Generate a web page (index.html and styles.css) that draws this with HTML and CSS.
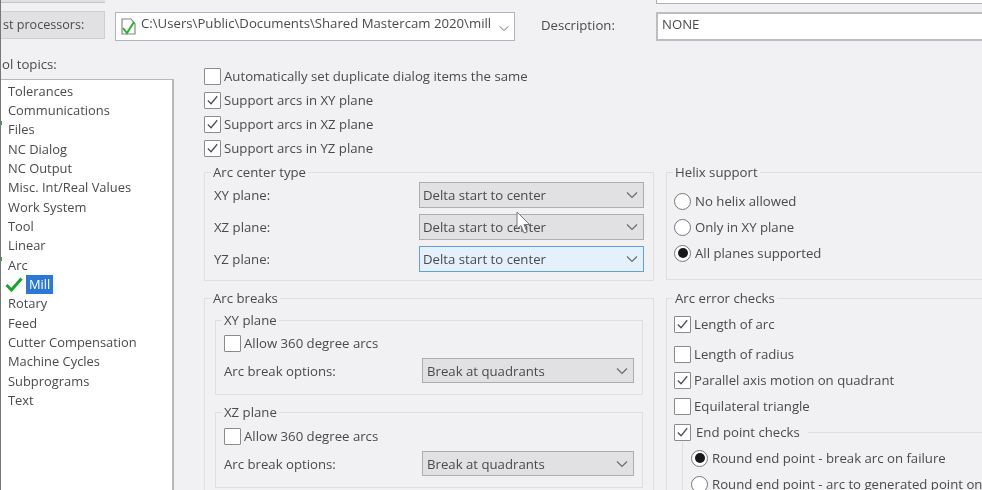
FILE: index.html
```html
<!DOCTYPE html>
<html lang="en">
<head>
<meta charset="utf-8">
<title>Machine definition control topics</title>
<link rel="stylesheet" href="styles.css">
</head>
<body>
<svg class="defs" width="0" height="0" aria-hidden="true">
  <symbol id="chev" viewBox="0 0 12 8"><path d="M1 1.5 6 6.5 11 1.5" fill="none" stroke="#6b6b6f" stroke-width="1.2"/></symbol>
  <symbol id="tick" viewBox="0 0 16 16"><path d="M3 8.5 6.5 12 13 4" fill="none" stroke="#4c4c50" stroke-width="1.3"/></symbol>
</svg>
<div class="dialog">
  <div class="stub-row"><div class="stub-btn"></div><div class="stub-input"></div></div>
  <div class="top-row">
    <div class="pp-button">st processors:</div>
    <div class="pp-combo">
      <svg class="file-icon" width="15" height="17" viewBox="0 0 15 17"><path d="M1 1H10L14 6V16H1Z" fill="#fff" stroke="#858585" stroke-width="1.2"/><path d="M2 10 6 15 13 4" fill="none" stroke="#22b52e" stroke-width="2"/></svg>
      <span class="pp-path">C:\Users\Public\Documents\Shared Mastercam 2020\mill</span>
      <svg class="chev" width="10" height="7"><use href="#chev"/></svg>
    </div>
    <div class="desc-label">Description:</div>
    <div class="desc-input">NONE</div>
  </div>
  <div class="body-row">
    <aside class="side">
      <div class="side-label">ol topics:</div>
      <ul class="topics">
        <li>Tolerances</li>
        <li>Communications</li>
        <li class="dotted">Files</li>
        <li>NC Dialog</li>
        <li>NC Output</li>
        <li>Misc. Int/Real Values</li>
        <li>Work System</li>
        <li>Tool</li>
        <li>Linear</li>
        <li class="dotted">Arc</li>
        <li class="mill">
          <svg class="green-check" width="18" height="15" viewBox="0 0 18 15"><path d="M1.5 8 6.5 13 16.5 1.5" fill="none" stroke="#12a62a" stroke-width="3"/></svg>
          <span class="selected">Mill</span>
        </li>
        <li>Rotary</li>
        <li>Feed</li>
        <li>Cutter Compensation</li>
        <li>Machine Cycles</li>
        <li>Subprograms</li>
        <li>Text</li>
      </ul>
    </aside>
    <main class="main">
      <div class="opts">
        <label class="check"><span class="box"></span>Automatically set duplicate dialog items the same</label>
        <label class="check"><span class="box"><svg width="16" height="16"><use href="#tick"/></svg></span>Support arcs in XY plane</label>
        <label class="check"><span class="box"><svg width="16" height="16"><use href="#tick"/></svg></span>Support arcs in XZ plane</label>
        <label class="check"><span class="box"><svg width="16" height="16"><use href="#tick"/></svg></span>Support arcs in YZ plane</label>
      </div>
      <div class="groups">
        <fieldset class="group center-type">
          <legend>Arc center type</legend>
          <div class="plane-row"><span>XY plane:</span><div class="select wide"><span>Delta start to center</span><svg width="12" height="8"><use href="#chev"/></svg></div></div>
          <div class="plane-row"><span>XZ plane:</span><div class="select wide"><span>Delta start to center</span><svg width="12" height="8"><use href="#chev"/></svg></div></div>
          <div class="plane-row"><span>YZ plane:</span><div class="select wide focused"><span>Delta start to center</span><svg width="12" height="8"><use href="#chev"/></svg></div></div>
        </fieldset>
        <fieldset class="group helix">
          <legend>Helix support</legend>
          <label class="radio-row"><span class="radio"></span>No helix allowed</label>
          <label class="radio-row"><span class="radio"></span>Only in XY plane</label>
          <label class="radio-row"><span class="radio on"></span>All planes supported</label>
        </fieldset>
        <fieldset class="group breaks">
          <legend>Arc breaks</legend>
          <fieldset class="group inner">
            <legend>XY plane</legend>
            <label class="check small"><span class="box"></span>Allow 360 degree arcs</label>
            <div class="break-row"><span>Arc break options:</span><div class="select narrow"><span>Break at quadrants</span><svg width="12" height="8"><use href="#chev"/></svg></div></div>
          </fieldset>
          <fieldset class="group inner">
            <legend>XZ plane</legend>
            <label class="check small"><span class="box"></span>Allow 360 degree arcs</label>
            <div class="break-row"><span>Arc break options:</span><div class="select narrow"><span>Break at quadrants</span><svg width="12" height="8"><use href="#chev"/></svg></div></div>
          </fieldset>
        </fieldset>
        <fieldset class="group errors">
          <legend>Arc error checks</legend>
          <label class="check first"><span class="box"><svg width="16" height="16"><use href="#tick"/></svg></span>Length of arc</label>
          <label class="check tall"><span class="box"></span>Length of radius</label>
          <label class="check"><span class="box"><svg width="16" height="16"><use href="#tick"/></svg></span>Parallel axis motion on quadrant</label>
          <label class="check"><span class="box"></span>Equilateral triangle</label>
          <fieldset class="endpoint">
            <legend><span class="box"><svg width="16" height="16"><use href="#tick"/></svg></span>End point checks</legend>
            <label class="radio-row"><span class="radio on"></span>Round end point - break arc on failure</label>
            <label class="radio-row"><span class="radio"></span>Round end point - arc to generated point on</label>
          </fieldset>
        </fieldset>
      </div>
    </main>
  </div>
  <svg class="cursor" width="15" height="25" viewBox="0 0 15 25"><path d="M1 1V18L5 14.5 8 22 11 21 8 13.5H13.5Z" fill="#fff" stroke="#77777c"/></svg>
</div>
</body>
</html>
```
FILE: styles.css
```css
* { box-sizing: border-box; }
html, body { margin: 0; padding: 0; }
body { width: 982px; height: 490px; overflow: hidden; background: #f1f0f2; }
.defs { position: absolute; }

.dialog {
  position: relative;
  width: 982px;
  height: 490px;
  overflow: hidden;
  display: flex;
  flex-direction: column;
  background: #f1f0f2;
  color: #4a4a4e;
  font: 13.2px/18px "Open Sans", "Noto Sans", sans-serif;
  filter: blur(0.5px);
}
.dialog::before {
  content: "";
  position: absolute;
  left: 0; top: 0; bottom: 0;
  width: 1px;
  background: #77777a;
  z-index: 2;
}
.cursor { position: absolute; left: 516px; top: 211px; }

.stub-row { height: 4px; flex: none; display: flex; }
.stub-btn { width: 105px; height: 3px; background: #e1e0e2; border-bottom: 1px solid #c4c4c6; }
.stub-input { margin-left: 551px; flex: 1; background: #fff; border: 1px solid #b0b0b2; border-top: 0; border-right: 0; height: 4px; }

.top-row { height: 37px; flex: none; display: flex; align-items: flex-start; padding-top: 8px; }
.pp-button {
  width: 105px; height: 28px; margin-top: -1px;
  padding: 4px 0 0 3px;
  font-size: 12.6px;
  white-space: nowrap;
  background: #e1e0e2;
  border: 1px solid #cfcfd1;
  border-left: 0;
}
.pp-combo {
  width: 400px; height: 29px; margin-left: 10px;
  display: flex; align-items: center;
  padding: 0 5px 0 5px;
  background: #fff;
  border: 1px solid #b4b4b6;
}
.file-icon { flex: none; }
.pp-path { flex: 1; margin-left: 5px; margin-top: -7px; white-space: nowrap; overflow: hidden; }
.chev { flex: none; margin-top: 3px; }
.desc-label { width: 115px; margin-left: 26px; padding-top: 4px; }
.desc-input {
  flex: 1; height: 29px;
  padding: 1px 0 0 4px;
  background: #fff;
  border: 2px solid #bdbdbf;
  border-right: 0;
}

.body-row { flex: 1; min-height: 0; display: flex; }
.side { width: 174px; flex: none; padding-top: 14px; display: flex; flex-direction: column; }
.side-label { height: 18px; margin-bottom: 6px; padding-left: 2px; white-space: nowrap; }
.topics {
  flex: 1; margin: 0; padding: 1.5px 0 0 8px;
  list-style: none;
  font-size: 12.9px;
  background: #fff;
  border: 1px solid #b8b8ba;
  border-width: 1px 2px 0 0;
}
.topics li { height: 19.35px; line-height: 19.35px; position: relative; white-space: nowrap; }
.topics .dotted::before {
  content: ""; position: absolute; left: -7px; top: 1px;
  width: 1px; height: 4px; background: #3aa54a;
}
.mill { display: flex; align-items: center; }
.green-check { margin-left: -3px; flex: none; }
.selected { margin-left: 3px; padding: 0 3px; background: #2b78d9; color: #fff; height: 19px; line-height: 19px; }

.main { flex: 1; min-width: 0; padding: 23px 0 0 30px; }
.check { display: flex; align-items: center; height: 24px; white-space: nowrap; }
.box {
  width: 17px; height: 17px; flex: none; margin-right: 3px;
  display: inline-flex; align-items: center; justify-content: center;
  background: #fff;
  border: 1px solid #8a8a8d;
  border-radius: 1px;
}
.opts { height: 99px; }

.groups {
  width: 802px;
  display: grid;
  grid-template-columns: 450px 340px;
  column-gap: 12px;
  row-gap: 8px;
  align-items: start;
}
.group {
  margin: 0; min-width: 0;
  border: 1px solid #dfdfe1;
  padding: 0;
}
.group > legend { padding: 0 2px; height: 18px; line-height: 18px; }

.center-type { padding: 1px 9px 8px 9px; }
.center-type > legend { margin-left: -3px; }
.plane-row { display: flex; align-items: center; justify-content: space-between; height: 26px; }
.plane-row + .plane-row { margin-top: 6px; }
.select {
  display: flex; align-items: center; justify-content: space-between;
  height: 26px;
  padding: 0 5px 0 3px;
  background: #e1e0e2;
  border: 1px solid #adadaf;
  white-space: nowrap;
}
.select.wide { width: 225px; }
.select.narrow { width: 212px; height: 25px; padding-left: 4px; }
.focused { background: #e4f1fc; border-color: #62a0da; }

.helix { padding: 7px 0 13px 7px; }
.helix > legend { margin-left: -1px; }
.radio-row { display: flex; align-items: center; height: 26px; white-space: nowrap; }
.radio {
  width: 17px; height: 17px; flex: none; margin-right: 4px;
  display: inline-flex; align-items: center; justify-content: center;
  background: #fff;
  border: 1px solid #77777a;
  border-radius: 50%;
}
.radio.on::after {
  content: ""; width: 10px; height: 10px;
  border-radius: 50%; background: #18181a;
}

.breaks { height: 220px; padding: 4px 10px 0 10px; }
.breaks > legend { margin-left: -4px; }
.inner { padding: 4px 8px 11px 8px; }
.inner + .inner { margin-top: 8px; padding-top: 5px; }
.inner > legend { margin-left: -2px; }
.small { height: 20px; margin-bottom: 5px; }
.break-row { display: flex; align-items: center; justify-content: space-between; height: 25px; }

.errors { height: 220px; padding: 5px 0 0 7px; }
.errors > legend { margin-left: -1px; }
.errors .check { height: 26px; }
.errors .first { height: 24px; }
.errors .tall { margin-top: 5px; }
.endpoint {
  margin: 3px 0 0 8px; padding: 3px 0 0 8px; min-width: 0;
  border: 0; border-top: 1px solid #dfdfe1; border-left: 1px solid #dfdfe1;
}
.endpoint > legend {
  margin-left: -17px; padding: 0 8px 0 0; height: 20px;
  display: flex; align-items: center;
}
.endpoint .box { margin-right: 5px; }
```
